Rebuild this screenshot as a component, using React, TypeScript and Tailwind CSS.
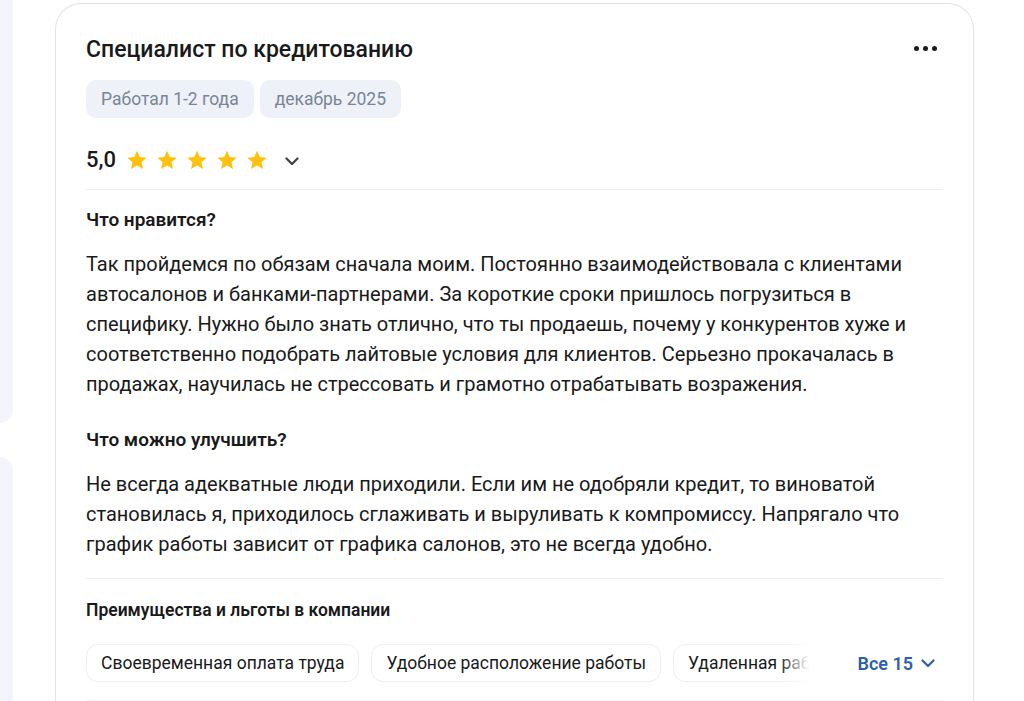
import React from 'react';

const Star = () => (
  <svg width="22" height="22" viewBox="0 0 24 24" className="shrink-0">
    <path
      d="M12 1.8l3.05 6.9 7.45.72-5.62 4.98 1.64 7.35L12 17.9l-6.52 3.85 1.64-7.35L1.5 9.42l7.45-.72L12 1.8z"
      fill="#fec10d"
    />
  </svg>
);

const Chevron = ({ color, className }: { color: string; className?: string }) => (
  <svg width="14" height="9" viewBox="0 0 14 9" className={className}>
    <path d="M1.5 1.5L7 7l5.5-5.5" fill="none" stroke={color} strokeWidth="2.2" strokeLinecap="round" strokeLinejoin="round" />
  </svg>
);

const likes =
  'Так пройдемся по обязам сначала моим. Постоянно взаимодействовала с клиентами автосалонов и банками-партнерами. За короткие сроки пришлось погрузиться в специфику. Нужно было знать отлично, что ты продаешь, почему у конкурентов хуже и соответственно подобрать лайтовые условия для клиентов. Серьезно прокачалась в продажах, научилась не стрессовать и грамотно отрабатывать возражения.';

const improve =
  'Не всегда адекватные люди приходили. Если им не одобряли кредит, то виноватой становилась я, приходилось сглаживать и выруливать к компромиссу. Напрягало что график работы зависит от графика салонов, это не всегда удобно.';

const perks = ['Своевременная оплата труда', 'Удобное расположение работы', 'Удаленная работа', 'ДМС'];

export default function App() {
  return (
    <div className="flex h-[701px] w-[1024px] overflow-hidden bg-white font-['Roboto',sans-serif] text-[#1a1a1a]">
      {/* side column peeking in */}
      <div className="flex w-[13px] shrink-0 flex-col gap-[34px]">
        <div className="h-[423px] rounded-br-[18px] bg-[#f4f5fa]" />
        <div className="flex-1 rounded-tr-[18px] bg-[#f4f5fa]" />
      </div>

      <div className="ml-[42px] mt-[3px] w-[919px] shrink-0 self-start rounded-t-[26px] border border-b-0 border-[#dfe4ec] px-[30px] pt-[32px] pb-10">
        {/* header */}
        <div className="flex items-start justify-between">
          <h2 className="text-[23px] leading-[28px] font-medium">Специалист по кредитованию</h2>
          <button className="mr-[6px] flex h-6 w-7 items-center justify-end gap-[4px] pt-[1px]">
            <span className="h-[5px] w-[5px] rounded-full bg-[#1a1a1a]" />
            <span className="h-[5px] w-[5px] rounded-full bg-[#1a1a1a]" />
            <span className="h-[5px] w-[5px] rounded-full bg-[#1a1a1a]" />
          </button>
        </div>

        <div className="mt-4 flex gap-[6px]">
          <span className="flex h-[38px] items-center rounded-[10px] bg-[#eef1f7] px-[15px] text-[17.5px] text-[#7a8497]">Работал 1-2 года</span>
          <span className="flex h-[38px] items-center rounded-[10px] bg-[#eef1f7] px-[15px] text-[17.5px] text-[#7a8497]">декабрь 2025</span>
        </div>

        {/* rating */}
        <div className="mt-[26px] flex h-8 items-center">
          <span className="mr-[10px] text-[22px] font-medium leading-8">5,0</span>
          <div className="flex gap-[8px]">
            <Star />
            <Star />
            <Star />
            <Star />
            <Star />
          </div>
          <Chevron color="#404040" className="ml-[17px] mt-[2px]" />
        </div>

        <div className="mt-[13px] h-px bg-[#eef0f3]" />

        <h3 className="mt-[18px] text-[19px] leading-6 font-semibold">Что нравится?</h3>
        <p className="mt-[17px] text-[20px] leading-[30px]">{likes}</p>

        <h3 className="mt-[29px] text-[19px] leading-6 font-semibold">Что можно улучшить?</h3>
        <p className="mt-[17px] text-[20px] leading-[30px]">{improve}</p>

        <div className="mt-[19px] h-px bg-[#eef0f3]" />

        <h4 className="mt-[21px] text-[17.5px] leading-5 font-semibold">Преимущества и льготы в компании</h4>

        <div className="mt-6 flex items-center">
          <div className="relative flex min-w-0 flex-1 gap-3 overflow-hidden">
            {perks.map((p) => (
              <span
                key={p}
                className="flex h-[38px] shrink-0 items-center rounded-[12px] border border-[#eceef3] px-[14px] text-[17.5px] whitespace-nowrap"
              >
                {p}
              </span>
            ))}
            <div className="pointer-events-none absolute inset-y-0 right-0 w-[30px] bg-gradient-to-r from-white/0 to-white" />
          </div>
          <button className="ml-[48px] flex shrink-0 items-center gap-[8px] pr-2 text-[18px] font-semibold text-[#2f5fa6]">
            Все 15
            <Chevron color="#2f5fa6" className="mt-[1px]" />
          </button>
        </div>

        <div className="mt-[18px] h-px bg-[#eef0f3]" />
      </div>
    </div>
  );
}
